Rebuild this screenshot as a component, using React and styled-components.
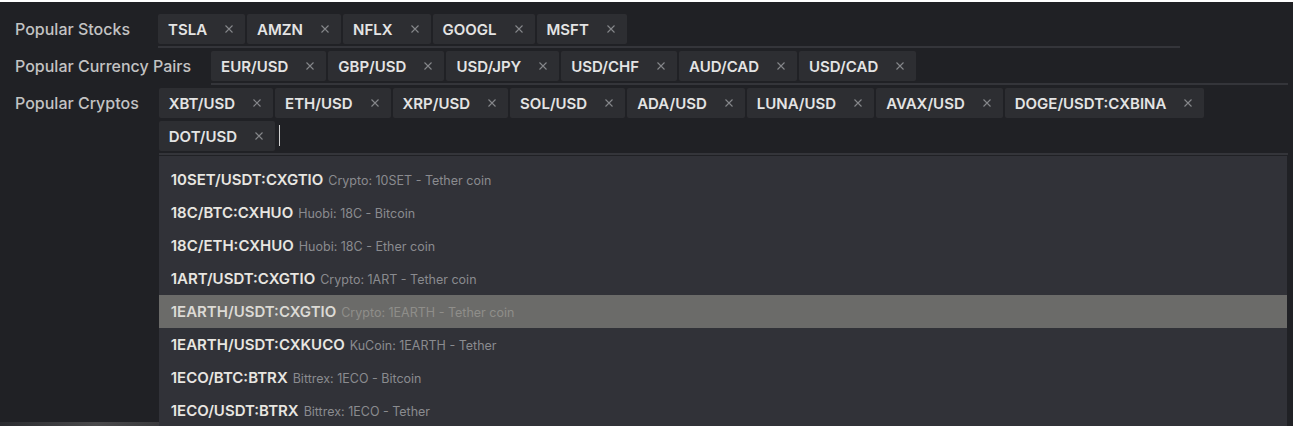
import React from "react";
import styled, { createGlobalStyle } from "styled-components";

const Global = createGlobalStyle`
  html, body { margin: 0; padding: 0; background: #202125; }
  body { font-family: Inter, "Noto Sans", sans-serif; }
  * { box-sizing: border-box; }
`;

const Page = styled.div`
  position: relative;
  height: 426px;
  overflow: hidden;
  border-top: 2px solid #ffffff;
  background: #202125;
  display: flex;
  flex-direction: column;
  padding: 12px 5px 0 15px;
`;

const Row = styled.div`
  display: flex;
  align-items: flex-start;
  margin-bottom: ${(p) => p.$mb || 3}px;
`;

const Label = styled.div`
  flex: none;
  min-width: 143px;
  padding-right: 20px;
  height: 30px;
  line-height: 30px;
  font-size: 16px;
  font-weight: 500;
  color: #c3c3c3;
  white-space: nowrap;
`;

const TagBox = styled.div`
  position: relative;
  flex: ${(p) => (p.$width ? "none" : "1")};
  width: ${(p) => (p.$width ? `${p.$width}px` : "auto")};
  display: flex;
  flex-wrap: wrap;
  gap: 3px 2px;
  padding-bottom: 2px;
  border-bottom: 2px solid #34353a;
`;

const Tag = styled.div`
  display: flex;
  align-items: center;
  height: 30px;
  padding: 0 12px 0 10px;
  background: #2d2e32;
  border-radius: 2px;
  font-size: 15px;
  font-weight: 600;
  color: #e4e4e4;
  white-space: nowrap;
`;

const CloseIcon = styled.svg`
  margin-left: 18px;
  width: 8px;
  height: 8px;
  flex: none;
`;

const Close = () => (
  <CloseIcon viewBox="0 0 8 8">
    <path d="M0.5 0.5 L7.5 7.5 M7.5 0.5 L0.5 7.5" stroke="#86878b" strokeWidth="1.1" fill="none" />
  </CloseIcon>
);

const Caret = styled.div`
  width: 1px;
  height: 21px;
  margin: 4px 0 0 2px;
  background: #d0d0d0;
`;

const Dropdown = styled.div`
  position: absolute;
  left: 0;
  top: calc(100% + 3px);
  width: 1128px;
  height: 300px;
  padding-top: 7px;
  background: #313238;
  z-index: 2;
`;

const Item = styled.div`
  display: flex;
  align-items: baseline;
  height: 33px;
  line-height: 33px;
  padding-left: 12px;
  background: ${(p) => (p.$active ? "#6b6b69" : "transparent")};
`;

const Symbol = styled.span`
  font-size: 15px;
  font-weight: 600;
  color: ${(p) => (p.$active ? "#dcdad5" : "#e8e6e1")};
`;

const Desc = styled.span`
  margin-left: 5px;
  font-size: 12.5px;
  color: ${(p) => (p.$active ? "#8f8e8a" : "#8a8b8f")};
`;

const BottomStrip = styled.div`
  margin-top: auto;
  margin-left: -15px;
  width: 160px;
  height: 4px;
  background: linear-gradient(90deg, #2a2b2f, #4a4a4c 60%, #3a3a3d);
`;

const stocks = ["TSLA", "AMZN", "NFLX", "GOOGL", "MSFT"];
const fx = ["EUR/USD", "GBP/USD", "USD/JPY", "USD/CHF", "AUD/CAD", "USD/CAD"];
const cryptos = [
  "XBT/USD", "ETH/USD", "XRP/USD", "SOL/USD", "ADA/USD", "LUNA/USD",
  "AVAX/USD", "DOGE/USDT:CXBINA", "DOT/USD",
];

const items = [
  ["10SET/USDT:CXGTIO", "Crypto: 10SET - Tether coin"],
  ["18C/BTC:CXHUO", "Huobi: 18C - Bitcoin"],
  ["18C/ETH:CXHUO", "Huobi: 18C - Ether coin"],
  ["1ART/USDT:CXGTIO", "Crypto: 1ART - Tether coin"],
  ["1EARTH/USDT:CXGTIO", "Crypto: 1EARTH - Tether coin", true],
  ["1EARTH/USDT:CXKUCO", "KuCoin: 1EARTH - Tether"],
  ["1ECO/BTC:BTRX", "Bittrex: 1ECO - Bitcoin"],
  ["1ECO/USDT:BTRX", "Bittrex: 1ECO - Tether"],
];

const Tags = ({ list }) =>
  list.map((t) => (
    <Tag key={t}>
      {t}
      <Close />
    </Tag>
  ));

export default function App() {
  return (
    <>
      <Global />
      <Page>
        <Row $mb={3}>
          <Label>Popular Stocks</Label>
          <TagBox $width={1022}>
            <Tags list={stocks} />
          </TagBox>
        </Row>
        <Row $mb={3}>
          <Label>Popular Currency Pairs</Label>
          <TagBox>
            <Tags list={fx} />
          </TagBox>
        </Row>
        <Row>
          <Label>Popular Cryptos</Label>
          <TagBox>
            <Tags list={cryptos} />
            <Caret />
            <Dropdown>
              {items.map(([s, d, a]) => (
                <Item key={s} $active={a}>
                  <Symbol $active={a}>{s}</Symbol>
                  <Desc $active={a}>{d}</Desc>
                </Item>
              ))}
            </Dropdown>
          </TagBox>
        </Row>
        <BottomStrip />
      </Page>
    </>
  );
}
